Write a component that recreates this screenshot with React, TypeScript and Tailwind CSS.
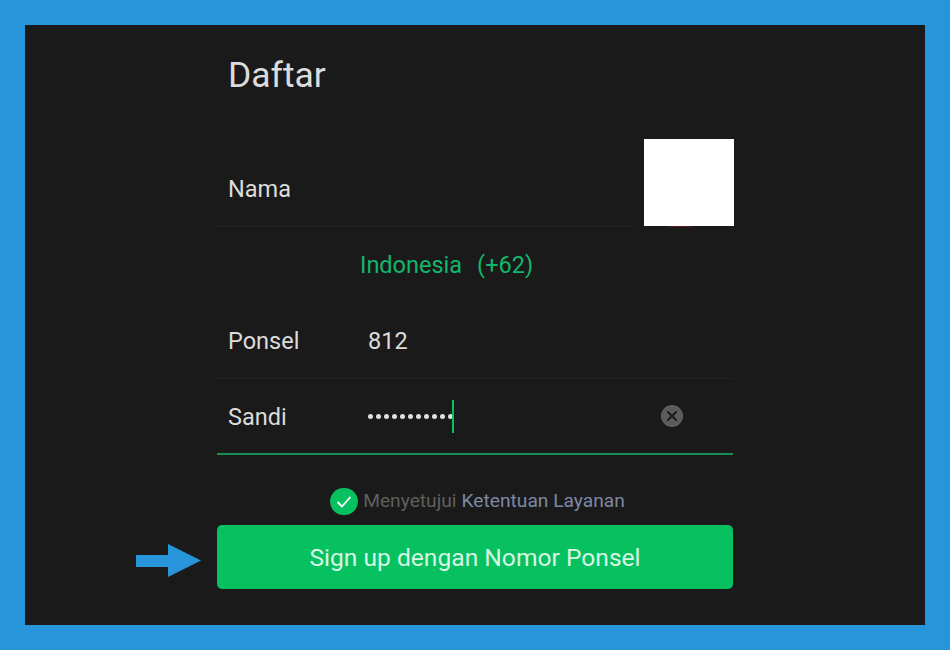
const font = { fontFamily: "Roboto, sans-serif" };

const Row = ({ label, children, className }: { label: string; children?: React.ReactNode; className: string }) => (
  <div className={`flex h-[76px] items-center pl-[11px] pt-[3px] ${className}`}>
    <div className="w-[140px] text-[23.5px] text-[#dcdcdc]">{label}</div>
    {children}
  </div>
);

const App = () => {
  return (
    <div className="h-[650px] w-[950px] bg-[#2894da] p-[25px]" style={font}>
      <div className="h-[600px] w-[900px] bg-[#1a1a1a]">
        <div className="relative mx-auto w-[516px]">
          <h1 className="flex h-[98px] items-center pl-[11px] pt-[3px] text-[35.5px] text-[#dcdcdc]">Daftar</h1>

          <div className="mt-[28px]">
            <Row label="Nama" className="w-[414px] border-b border-[#242424]" />
          </div>
          {/* covered part of the screenshot */}
          <div className="absolute top-[114px] left-[427px] h-[87px] w-[90px] bg-white" />
          <div className="absolute top-[201px] left-[452px] h-[1px] w-[22px] bg-[#5a1c1c]" />

          <div className="flex h-[76px] items-center pl-[143px] pt-[2px] text-[23.5px] text-[#12b76a]">
            Indonesia<span className="ml-[15px]">(+62)</span>
          </div>

          <Row label="Ponsel" className="border-b border-[#242424]">
            <span className="text-[23.5px] text-[#dcdcdc]">812</span>
          </Row>

          <Row label="Sandi" className="border-b-2 border-[#1b8f52]">
            <span className="mb-[3px] flex items-center gap-[3px]">
              {Array.from({ length: 11 }).map((_, i) => (
                <span key={i} className="h-[5px] w-[5px] rounded-full bg-[#e0e0e0]" />
              ))}
            </span>
            <span className="mb-[3px] -ml-[1px] h-[33px] w-[2px] bg-[#07c160]" />
            <span className="mb-[4px] ml-[207px] flex h-[22px] w-[22px] items-center justify-center rounded-full bg-[#5c5c5c]">
              <svg width="12" height="12" viewBox="0 0 12 12" fill="none" stroke="#1a1a1a" strokeWidth="2" strokeLinecap="round">
                <path d="M2 2l8 8M10 2l-8 8" />
              </svg>
            </span>
          </Row>

          <div className="mt-[33px] mb-[10px] flex h-[27px] items-center justify-center pl-[5px] text-[19.2px]">
            <span className="mr-[5px] flex h-[27px] w-[28px] items-center justify-center rounded-full bg-[#07c160]">
              <svg width="16" height="14" viewBox="0 0 16 14" fill="none" stroke="#ffffff" strokeWidth="1.8" strokeLinecap="round" strokeLinejoin="round">
                <path d="M2 7.5l4 4 8-9" />
              </svg>
            </span>
            <span className="text-[#5f5f5f]">Menyetujui</span>
            <span className="ml-[5px] text-[#7d88a5]">Ketentuan Layanan</span>
          </div>

          <div className="relative">
            <button
              type="button"
              className="flex h-[64px] w-full items-center justify-center rounded-[5px] bg-[#07c160] pt-[3px] text-[24.6px] text-[#d6f7e4]"
            >
              Sign up dengan Nomor Ponsel
            </button>
            <svg className="absolute top-[19px] left-[-81px]" width="65" height="33" viewBox="0 0 65 33" fill="#2894da">
              <path d="M0 11h32V0l33 16.5L32 33V23H0z" />
            </svg>
          </div>
        </div>
      </div>
    </div>
  );
};

export default App;
